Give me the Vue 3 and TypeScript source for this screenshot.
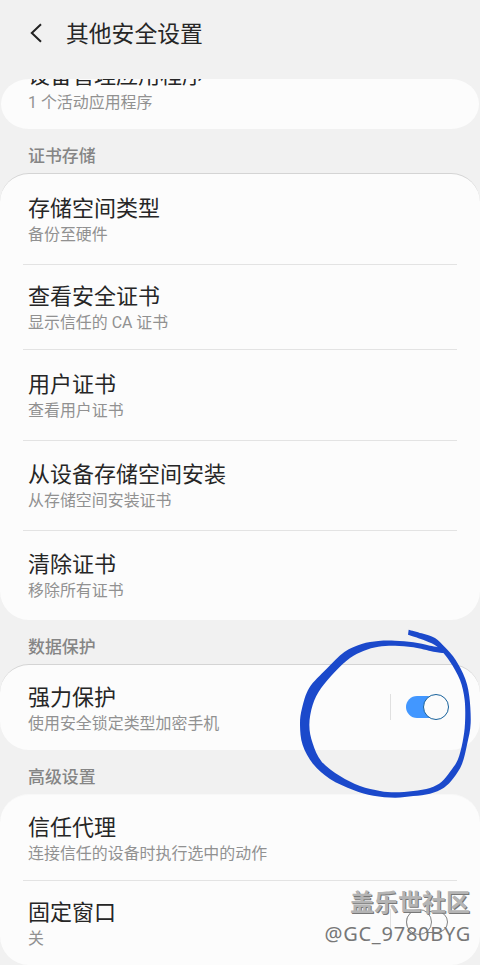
<script setup lang="ts">
interface Row {
  title: string
  summary: string
  height: number
  top: number
  toggle?: 'on' | 'off'
}

interface Section {
  label: string
  rows: Row[]
}

type Point = [number, number]

const sections: Section[] = [
  {
    label: '证书存储',
    rows: [
      { title: '存储空间类型', summary: '备份至硬件', height: 90, top: 20 },
      { title: '查看安全证书', summary: '显示信任的 CA 证书', height: 85, top: 18 },
      { title: '用户证书', summary: '查看用户证书', height: 91, top: 21 },
      { title: '从设备存储空间安装', summary: '从存储空间安装证书', height: 90, top: 20 },
      { title: '清除证书', summary: '移除所有证书', height: 90, top: 20 },
    ],
  },
  {
    label: '数据保护',
    rows: [
      { title: '强力保护', summary: '使用安全锁定类型加密手机', height: 85, top: 18, toggle: 'on' },
    ],
  },
  {
    label: '高级设置',
    rows: [
      { title: '信任代理', summary: '连接信任的设备时执行选中的动作', height: 85, top: 18 },
      { title: '固定窗口', summary: '关', height: 85, top: 18, toggle: 'off' },
    ],
  },
]

// Both edges of the pen stroke, start to end
const outerEdge: Point[] = [
  [356, 59], [395, 70], [435, 84], [465, 112], [497, 150], [525, 205], [538, 260], [542, 340],
  [532, 400], [516, 462], [490, 505], [462, 533], [420, 551], [370, 558], [315, 563], [250, 557],
  [190, 540], [120, 507], [70, 463], [38, 405], [30, 345], [36, 295], [58, 233], [110, 176],
  [163, 126], [215, 102], [265, 93], [315, 92], [370, 97], [420, 107], [462, 114],
]
const innerEdge: Point[] = [
  [462, 129], [430, 125], [370, 112], [315, 107], [265, 110], [222, 122], [180, 144], [135, 185],
  [93, 235], [68, 285], [58, 345], [68, 400], [95, 455], [150, 498], [210, 528], [270, 543],
  [315, 547], [370, 543], [420, 534], [455, 515], [480, 485], [503, 450], [518, 395], [525, 340],
  [524, 270], [510, 210], [480, 155], [450, 118], [425, 100], [390, 86], [354, 74],
]

function curve(points: Point[]): string {
  let d = ''
  for (let i = 0; i < points.length - 1; i++) {
    const a = points[Math.max(i - 1, 0)]
    const b = points[i]
    const c = points[i + 1]
    const e = points[Math.min(i + 2, points.length - 1)]
    d += `C${b[0] + (c[0] - a[0]) / 6} ${b[1] + (c[1] - a[1]) / 6} `
    d += `${c[0] - (e[0] - b[0]) / 6} ${c[1] - (e[1] - b[1]) / 6} ${c[0]} ${c[1]}`
  }
  return d
}

const penPath = `M${outerEdge[0].join(' ')}${curve(outerEdge)}L${innerEdge[0].join(' ')}${curve(innerEdge)}Z`
</script>

<template>
  <div class="screen">
    <header class="app-bar">
      <svg class="back" width="14" height="20" viewBox="0 0 14 20">
        <path d="M12 1.2 2.8 10l9.2 8.8" fill="none" stroke="#222" stroke-width="2" />
      </svg>
      <h1>其他安全设置</h1>
    </header>

    <!-- Partly scrolled under the app bar -->
    <div class="card clipped">
      <div class="title">设备管理应用程序</div>
      <div class="summary">1 个活动应用程序</div>
    </div>

    <section v-for="section in sections" :key="section.label">
      <h2>{{ section.label }}</h2>
      <div class="card">
        <div
          v-for="row in section.rows"
          :key="row.title"
          class="row"
          :style="{ height: row.height + 'px', paddingTop: row.top + 'px' }"
        >
          <div class="text">
            <div class="title">{{ row.title }}</div>
            <div class="summary">{{ row.summary }}</div>
          </div>
          <div v-if="row.toggle" class="control" :class="row.toggle">
            <div class="switch"><div class="thumb"></div></div>
          </div>
        </div>
      </div>
    </section>

    <svg class="pen" width="190" height="200" viewBox="0 0 570 600">
      <path :d="penPath" fill="#1b49cb" />
    </svg>

    <div class="watermark">
      <div class="community">盖乐世社区</div>
      <div class="user">@GC_9780BYG</div>
    </div>
  </div>
</template>

<style>
body {
  margin: 0;
  background: #f1f1f1;
}
</style>

<style scoped>
.screen {
  position: relative;
  width: 480px;
  height: 965px;
  overflow: hidden;
  background: #f1f1f1;
  font-family: Roboto, 'Noto Sans CJK SC', sans-serif;
  color: #262626;
}

.app-bar {
  display: flex;
  align-items: center;
  height: 69px;
  padding: 0 0 10px 29px;
}

.back {
  margin-right: 23px;
  margin-bottom: 3px;
}

h1 {
  margin: 0;
  font-size: 22.8px;
  font-weight: 400;
  line-height: 32px;
}

.card {
  box-sizing: border-box;
  background: #fcfcfc;
  border-top: 1px solid #d4d4d4;
  border-radius: 29px;
  overflow: hidden;
}

section:last-of-type .card {
  border-top-color: #f8f8f8;
}

.clipped {
  display: flex;
  flex-direction: column;
  justify-content: flex-end;
  height: 50px;
  margin: 0 1px;
  padding: 0 27px 14px;
  border-top: 0;
  border-radius: 28px / 25px;
}

.clipped .title {
  flex: none;
  margin-bottom: 1px;
}

.clipped .summary {
  flex: none;
}

h2 {
  box-sizing: border-box;
  height: 44px;
  margin: 0;
  padding: 6px 28px 0;
  font-size: 16.9px;
  font-weight: 500;
  line-height: 42px;
  color: #858585;
}

.row {
  position: relative;
  display: flex;
  justify-content: space-between;
  box-sizing: border-box;
  padding-left: 28px;
  padding-right: 32px;
}

.row + .row::before {
  content: '';
  position: absolute;
  top: 0;
  left: 23px;
  right: 23px;
  height: 1px;
  background: #e3e3e3;
}

.title {
  font-size: 22px;
  line-height: 29px;
  white-space: nowrap;
}

.summary {
  font-size: 15.95px;
  line-height: 24px;
  color: #919191;
  white-space: nowrap;
}

.control {
  display: flex;
  align-items: center;
  width: 57px;
  height: 26px;
  margin-top: 11px;
  border-left: 1px solid #e0e0e0;
}

.switch {
  display: flex;
  box-sizing: border-box;
  width: 42px;
  height: 22px;
  margin-left: 15px;
  border-radius: 11px;
  background: #4297ff;
}

.thumb {
  flex: none;
  box-sizing: border-box;
  width: 26px;
  height: 26px;
  margin: -2px 0 0 17px;
  border: 1px solid #17619b;
  border-radius: 50%;
  background: #fcfcfc;
}

.off .switch {
  background: #fcfcfc;
  border: 1px solid #858585;
}

.off .thumb {
  margin: -3px 0 0 -1px;
  border-color: #858585;
}

.pen {
  position: absolute;
  left: 290px;
  top: 610px;
}

.watermark {
  position: absolute;
  right: 10px;
  top: 886px;
  text-align: right;
  color: #777;
}

.community {
  font-size: 24px;
  font-weight: 700;
  line-height: 34px;
  color: #b4b4b4;
  text-shadow: 1px 1px 0 #777;
}

.user {
  margin-right: -1px;
  font-family: 'Noto Sans', sans-serif;
  font-size: 20px;
  line-height: 28px;
  letter-spacing: 0.75px;
}
</style>
